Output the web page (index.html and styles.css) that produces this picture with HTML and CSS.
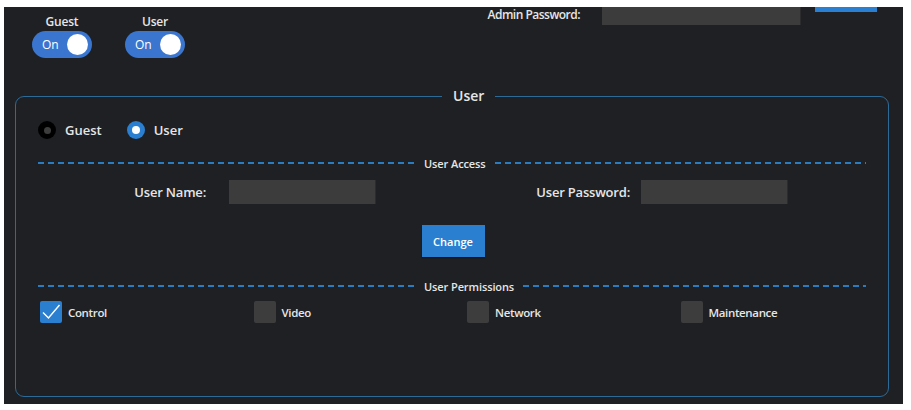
FILE: index.html
```html
<!DOCTYPE html>
<html>
<head>
<meta charset="utf-8">
<link rel="stylesheet" href="styles.css">
</head>
<body>
<div class="page">
  <div class="top">
    <div class="toggles">
      <div class="toggle-group">
        <span class="toggle-label">Guest</span>
        <div class="toggle"><span class="toggle-text">On</span><span class="knob"></span></div>
      </div>
      <div class="toggle-group">
        <span class="toggle-label">User</span>
        <div class="toggle"><span class="toggle-text">On</span><span class="knob"></span></div>
      </div>
    </div>
    <div class="admin">
      <span class="admin-label">Admin Password:</span>
      <div class="input admin-input"></div>
      <div class="admin-btn"></div>
    </div>
  </div>

  <fieldset class="panel">
    <legend class="panel-legend">User</legend>

    <div class="radios">
      <label class="radio-item"><span class="radio radio-off"></span><span>Guest</span></label>
      <label class="radio-item"><span class="radio radio-on"></span><span>User</span></label>
    </div>

    <div class="divider divider-access">
      <span class="dash dash-left"></span>
      <span class="divider-label">User Access</span>
      <span class="dash dash-right"></span>
    </div>

    <div class="fields">
      <span class="field-label label-name">User Name:</span>
      <div class="input field-input"></div>
      <span class="field-label label-pass">User Password:</span>
      <div class="input field-input input-pass"></div>
    </div>

    <div class="actions">
      <button class="btn-change">Change</button>
    </div>

    <div class="divider divider-perm">
      <span class="dash dash-left"></span>
      <span class="divider-label">User Permissions</span>
      <span class="dash dash-right"></span>
    </div>

    <div class="checks">
      <label class="check-item"><span class="check check-on"><svg width="22" height="22" viewBox="0 0 22 22"><polyline points="3,11.5 8.5,17 19.5,4" fill="none" stroke="#ffffff" stroke-width="1.4"/></svg></span><span>Control</span></label>
      <label class="check-item"><span class="check"></span><span>Video</span></label>
      <label class="check-item"><span class="check"></span><span>Network</span></label>
      <label class="check-item"><span class="check"></span><span>Maintenance</span></label>
    </div>
  </fieldset>
</div>
</body>
</html>
```

FILE: styles.css
```css
html, body {
  margin: 0;
  padding: 0;
  background: #ffffff;
}

body {
  font-family: "Open Sans", "Noto Sans", sans-serif;
  color: #e6e6e6;
}

.page {
  margin: 7px 0 0 4px;
  width: 899px;
  height: 397px;
  background: #1f2023;
  overflow: hidden;
}

.top {
  display: flex;
  align-items: flex-start;
  height: 79px;
}

.toggles {
  display: flex;
  gap: 33px;
  padding-left: 28px;
  padding-top: 7px;
}

.toggle-group {
  display: flex;
  flex-direction: column;
  align-items: center;
  width: 60px;
}

.toggle-label {
  font-size: 12px;
  font-weight: 600;
  line-height: 15px;
  margin-bottom: 2px;
  letter-spacing: -0.2px;
}

.toggle {
  width: 60px;
  height: 27px;
  border-radius: 14px;
  background: #3a76cf;
  display: flex;
  align-items: center;
  justify-content: space-between;
  padding: 0 4px 0 10px;
  box-sizing: border-box;
}

.toggle-text {
  font-size: 12px;
  color: #ffffff;
  font-weight: 500;
}

.knob {
  width: 21px;
  height: 21px;
  border-radius: 50%;
  background: #ffffff;
}

.admin {
  margin-left: auto;
  margin-right: 26px;
  display: flex;
  align-items: flex-start;
}

.admin-label {
  font-size: 12px;
  font-weight: 600;
  line-height: 16px;
  letter-spacing: -0.5px;
  margin-right: 22px;
}

.input {
  background: #3c3c3d;
  box-sizing: border-box;
  border-right: 1px solid #2c2c2e;
}

.admin-input {
  width: 199px;
  height: 28px;
  margin-top: -10px;
  margin-right: 14px;
}

.admin-btn {
  width: 62px;
  height: 32px;
  margin-top: -27px;
  background: #2b7fd2;
}

.panel {
  margin: 0 14px 0 11px;
  padding: 0 22px 73px 22px;
  border: 1px solid #2c6a98;
  border-radius: 9px;
  min-width: 0;
}

.panel-legend {
  font-size: 14px;
  font-weight: 600;
  line-height: 20px;
  padding: 0 11px;
  margin-left: 404px;
}

.radios {
  display: flex;
  align-items: center;
  margin-top: 14px;
  height: 20px;
}

.radio-item {
  display: flex;
  align-items: center;
  font-size: 13px;
  font-weight: 600;
}

.radio-item:first-child {
  margin-right: 25px;
}

.radio {
  width: 18px;
  height: 18px;
  border-radius: 50%;
  box-sizing: border-box;
  margin-right: 9px;
  display: flex;
  align-items: center;
  justify-content: center;
}

.radio-off {
  background: #000000;
}

.radio-off::after {
  content: "";
  width: 7px;
  height: 7px;
  border-radius: 50%;
  background: #3d3d3d;
}

.radio-on {
  background: #2a7fd0;
}

.radio-on::after {
  content: "";
  width: 8px;
  height: 8px;
  border-radius: 50%;
  background: #ffffff;
}

.divider {
  display: flex;
  align-items: center;
  height: 16px;
}

.divider-access {
  margin-top: 15px;
}

.divider-perm {
  margin-top: 21px;
}

.dash {
  height: 2px;
  background: repeating-linear-gradient(to right, #2a7cc0 0, #2a7cc0 6px, transparent 6px, transparent 10px);
}

.dash-left {
  width: 376px;
}

.dash-right {
  flex: 1;
}

.divider-label {
  font-size: 11px;
  font-weight: 600;
  padding: 0 9px 0 10px;
  white-space: nowrap;
  letter-spacing: -0.1px;
}

.fields {
  display: flex;
  align-items: center;
  margin-top: 9px;
  height: 24px;
}

.field-label {
  font-size: 13px;
  font-weight: 600;
  text-align: right;
  box-sizing: border-box;
  letter-spacing: -0.2px;
}

.label-name {
  width: 168px;
  margin-right: 23px;
}

.label-pass {
  width: 254px;
  margin-right: 11px;
}

.field-input {
  width: 147px;
  height: 24px;
}

.actions {
  display: flex;
  justify-content: center;
  margin-top: 21px;
  padding-left: 2px;
}

.btn-change {
  width: 63px;
  height: 32px;
  border: none;
  background: #2b7fd1;
  color: #ffffff;
  font-family: "Open Sans", "Noto Sans", sans-serif;
  font-size: 11px;
  font-weight: 600;
  padding: 0;
  box-shadow: 0 1px 1px rgba(0, 0, 0, 0.4);
}

.checks {
  display: grid;
  grid-template-columns: 213.5px 213.5px 213.5px 1fr;
  margin-top: 7px;
  padding-left: 2px;
}

.check-item {
  display: flex;
  align-items: center;
  font-size: 11.5px;
  font-weight: 600;
  letter-spacing: -0.35px;
}

.check {
  width: 22px;
  height: 22px;
  background: #3d3d3e;
  border-radius: 2px;
  margin-right: 6px;
  display: block;
}

.check-on {
  background: #2b7fd1;
}

.check svg {
  display: block;
}
```
